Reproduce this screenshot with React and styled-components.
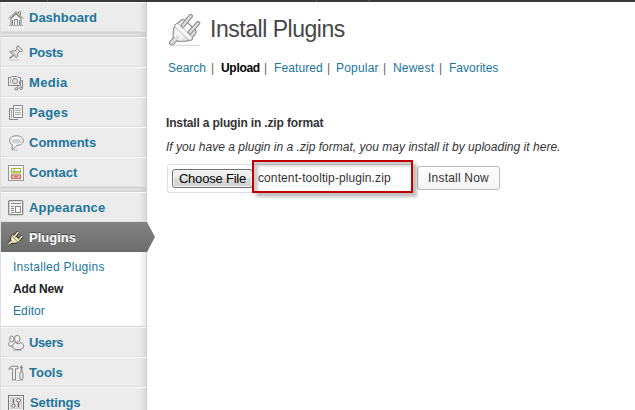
import React from 'react';
import styled, { createGlobalStyle } from 'styled-components';

const GlobalStyle = createGlobalStyle`
  * { box-sizing: border-box; }
  body { margin: 0; background: #fff; font-family: "Liberation Sans", Arial, sans-serif; font-size: 12px; color: #333; overflow: hidden; }
`;

const Page = styled.div`
  height: 410px;
  overflow: hidden;
  display: flex;
  flex-direction: column;
`;
const AdminBar = styled.div`
  flex: none;
  height: 2px;
  display: flex;
  background: #393737;
`;
const BarSection = styled.div`
  width: ${p => p.$w}px;
  border-right: 1px solid #5a5858;
`;
const Columns = styled.div`
  flex: 1;
  min-height: 0;
  display: flex;
`;
const Sidebar = styled.nav`
  flex: none;
  width: 147px;
  background: #ececec;
  border-left: 1px solid #dfdfdf;
  border-right: 1px solid #cfcfcf;
`;
const shade = 'linear-gradient(to left, rgba(0,0,0,.085), rgba(0,0,0,0) 7px)';
const MenuItem = styled.a`
  height: 30px;
  display: flex;
  align-items: center;
  padding-left: 7px;
  border-top: 1px solid #f9f9f9;
  border-bottom: 1px solid #dfdfdf;
  background: ${shade};
  color: #21759b;
  font-size: 13px;
  font-weight: bold;
  line-height: 18px;
`;
const MenuLabel = styled.span`
  margin-left: ${p => p.$gap ?? 5}px;
  padding-top: 2px;
  letter-spacing: ${p => p.$ls ?? 0}px;
`;
const Separator = styled.div`
  height: 5px;
  background: ${shade}, #dedede;
  border-top: 1px solid #cfcfcf;
  border-bottom: 1px solid #cfcfcf;
`;
const CurrentItem = styled(MenuItem)`
  width: 154px;
  color: #fff;
  border-top-color: #858585;
  border-bottom-color: #6b6b6b;
  background: linear-gradient(#828282, #6c6c6c);
  clip-path: polygon(0 0, 146px 0, 154px 50%, 146px 100%, 0 100%);
  position: relative;
  text-shadow: 0 -1px 0 #444;
`;
const Submenu = styled.div`
  height: 75px;
  padding: 4px 0 0 12px;
  background: ${shade}, #fff;
  border-bottom: 1px solid #d5d5d5;
`;
const SubItem = styled.a`
  display: block;
  height: 22px;
  line-height: 22px;
  color: ${p => (p.$active ? '#222' : '#21759b')};
  font-weight: ${p => (p.$active ? 'bold' : 'normal')};
  letter-spacing: ${p => p.$ls ?? 0}px;
`;
const Content = styled.main`
  flex: 1;
  padding: 11px 0 0 19px;
`;
const Heading = styled.header`
  display: flex;
  height: 36px;
`;
const Title = styled.h1`
  margin: 0 0 0 8px;
  font-size: 23px;
  line-height: 33px;
  font-weight: normal;
  color: #464646;
  letter-spacing: ${p => p.$ls}px;
`;
const Tabs = styled.div`
  display: flex;
  margin: 11px 0 0 2px;
  line-height: 16px;
`;
const Tab = styled.a`
  width: ${p => p.$w}px;
  white-space: nowrap;
  color: ${p => (p.$active ? '#000' : '#21759b')};
  font-weight: ${p => (p.$active ? 'bold' : 'normal')};
  letter-spacing: ${p => p.$ls ?? 0}px;
`;
const Pipe = styled.span`
  width: ${p => p.$w ?? 8}px;
  color: #666;
`;
const Subhead = styled.h4`
  margin: 38px 0 0;
  line-height: 18px;
  font-size: 12px;
  letter-spacing: ${p => p.$ls}px;
`;
const Help = styled.p`
  margin: 6px 0 0;
  line-height: 18px;
  font-style: italic;
  letter-spacing: ${p => p.$ls}px;
`;
const UploadForm = styled.form`
  display: flex;
  margin: 4px 0 0 1px;
  height: 37px;
`;
const FileField = styled.div`
  width: 246px;
  height: 29px;
  margin-top: 4px;
  padding: 4px 0 0 4px;
  display: flex;
  border: 1px solid #dfdfdf;
  border-radius: 3px;
`;
const ChooseButton = styled.button`
  flex: none;
  width: 81px;
  height: 19px;
  padding: 0;
  border: 1px solid #707070;
  border-radius: 3px;
  box-shadow: inset 0 0 0 1px #f8f8f8;
  background: linear-gradient(#f2f2f2, #ebebeb 50%, #dddddd 50%, #cfcfcf);
  font: 13px/15px "Liberation Sans", Arial, sans-serif;
  color: #000;
  letter-spacing: ${p => p.$ls}px;
  white-space: nowrap;
`;
const FileHighlight = styled.div`
  flex: none;
  width: 161px;
  height: 33px;
  margin: -9px 0 0 -1px;
  padding: 1px 0 0 4px;
  border: 2px solid #c00000;
  box-shadow: 4px 4px 3px rgba(0,0,0,.25), inset 4px 4px 3px rgba(0,0,0,.2);
  line-height: 31px;
  letter-spacing: ${p => p.$ls}px;
  position: relative;
`;
const InstallButton = styled.button`
  width: 83px;
  height: 24px;
  margin: 6px 0 0 4px;
  padding: 0;
  border: 1px solid #bbb;
  border-radius: 3px;
  background: linear-gradient(#fefefe, #f4f4f4);
  font: 12px/20px "Liberation Sans", Arial, sans-serif;
  color: #333;
  letter-spacing: ${p => p.$ls}px;
`;
const Glyph = styled.svg`
  flex: none;
  width: 16px;
  height: 16px;
  margin-top: ${p => p.$dy ?? 1}px;
  fill: none;
  stroke: #858585;
  stroke-width: 1;
  overflow: visible;
`;
const PlugArt = styled.svg`
  flex: none;
  width: 34px;
  height: 34px;
  margin-left: 2px;
`;

const icons = {
  home: (
    <>
      <path d="M3 8v7.5h10V8L8 3z" fill="#f4f4f4" />
      <path d="M.7 8.5L8 1.5l7.3 7M2.5 9.2L8 4l5.5 5.2M12.5 5V1.8h-2V3" />
      <path d="M6.5 15V9.5h3V15M4.5 10v5M11.5 10v5" />
      <path d="M1 15.5h14" stroke="#aaa" />
    </>
  ),
  pin: (
    <>
      <path d="M1.5 13.5L5.5 10" strokeWidth="1.4" />
      <path d="M1.8 6.8L4 5.8l3 .2 2-2.2L8.6 1.8 10 .8l4.8 4.4-1 1.4-2-.2-2.3 2.2.2 3-1.2 1.2z" fill="#e4e4e4" />
      <path d="M9.3 4l2.9 2.6M4 6.8l4.5 4.2" stroke="#a5a5a5" />
      <path d="M1 15h10" stroke="#c4c4c4" />
    </>
  ),
  media: (
    <>
      <path d="M.5 2.5H3l1-1h5l1 1h2.5v8H.5z" fill="#f5f5f5" />
      <circle cx="7" cy="6.2" r="2.7" fill="#ddd" />
      <path d="M2.5 3.5v5" stroke="#aaa" />
      <path d="M9.8 14V9.5M14.5 13V5.5l-3 .8v3" />
      <ellipse cx="8.3" cy="14" rx="1.5" ry="1.2" fill="#ddd" />
      <ellipse cx="13" cy="13.3" rx="1.5" ry="1.2" fill="#ddd" />
    </>
  ),
  pages: (
    <>
      <path d="M5.5 3.5h-4v11h8v-1" fill="#eee" />
      <path d="M5.5 .5h9v12h-9z" fill="#f7f7f7" />
      <path d="M7 3.5h6M7 5.5h6M7 7.5h6M7 9.5h6M3.5 4.5v9" stroke="#aaa" />
    </>
  ),
  comments: (
    <>
      <path d="M3 15h7" stroke="#bbb" />
      <path d="M8.5 .8c4.2 0 6.8 2 6.8 4.7s-2.7 4.7-6.3 4.8L5 14.2l-1.2-.5.8-3.9C2.6 9 1.6 7.5 1.6 5.5 1.6 2.8 4.5.8 8.5.8z" fill="#f7f7f7" />
      <ellipse cx="8.5" cy="6.2" rx="5" ry="2.4" fill="#d2d2d2" stroke="none" />
    </>
  ),
  contact: (
    <>
      <rect x=".5" y=".5" width="15" height="15" fill="#f7f5f4" stroke="#969696" />
      <rect x="3.5" y="3.5" width="9" height="3" fill="#fff" stroke="#a5b748" />
      <path d="M6.5 3.5v3" stroke="#a5b748" />
      <path d="M3 8h10" stroke="#b6c565" strokeWidth="1.6" />
      <rect x="3.5" y="10" width="9" height="3.5" fill="#f3c4be" stroke="#c35f55" />
      <path d="M6 11.7h4" stroke="#c35f55" />
    </>
  ),
  appearance: (
    <>
      <rect x=".7" y=".7" width="14" height="14" rx="1" fill="#f8f8f8" strokeWidth="1.3" />
      <path d="M3 3.5h10" />
      <path d="M3 6.5h3M3 8.5h3M3 10.5h3M3 12.5h3" />
      <rect x="7.5" y="6.5" width="5" height="6" fill="#fff" />
    </>
  ),
  plug: (
    <>
      <path d="M.8 14l3-2.5" stroke="#333" strokeWidth="3.6" />
      <path d="M2.2 9L3.4 5.6 5.4 4l7 6-2.4 2.8-5.5.7z" fill="#eeeebb" stroke="#333" />
      <path d="M6.5 6.5L10.5 1.8M11 9.8l3.6-4" stroke="#333" strokeWidth="3.4" />
      <path d="M6.5 6.5L10.3 2M10.8 10l3.6-4" stroke="#eeeebb" strokeWidth="1.6" />
      <path d="M.8 14l3.2-2.8" stroke="#e9eab0" strokeWidth="1.8" />
      <path d="M3.8 6.5l6 5.3" stroke="#8d8e60" />
    </>
  ),
  users: (
    <>
      <ellipse cx="3.8" cy="4" rx="2.1" ry="3" fill="#f2f2f2" />
      <path d="M2.5 6.5C0 7.5 0 10.5 1.5 11H6" fill="#eee" />
      <ellipse cx="9.3" cy="3.8" rx="2.7" ry="3.5" fill="#f2f2f2" />
      <path d="M7.5 7.5C3 10 3.5 14.6 9.8 14.6s8-4.6 3-7C11.5 9 9 9 7.5 7.5z" fill="#f0f0f0" />
      <path d="M5 15.5h9" stroke="#bbb" />
    </>
  ),
  tools: (
    <>
      <path d="M.8 4.2C1.5 2.2 3 1.2 5 1.2h5v2.6H7.5v11h-3v-11c-1.5-.3-2.5 0-3.7.4z" fill="#eee" />
      <path d="M13.5 .5v6" strokeWidth="1.6" />
      <path d="M12 2.5h3" />
      <rect x="12" y="7" width="3" height="7.5" rx="1" fill="#eee" />
      <path d="M4 15.5h11" stroke="#c4c4c4" />
    </>
  ),
  settings: (
    <>
      <rect x=".5" y=".5" width="15" height="15" fill="#f8f8f8" stroke="#777" />
      <rect x="2.5" y="2.5" width="11" height="11" fill="#e2e2e2" stroke="#ccc" />
      <path d="M5.5 3.5v5M10.5 7.5v5" stroke="#666" strokeWidth="1.3" />
      <circle cx="5.5" cy="10.7" r="1.6" fill="#fff" stroke="#666" />
      <circle cx="10.5" cy="5.3" r="1.8" fill="#fff" stroke="#666" />
    </>
  ),
};

const Icon = ({ name, dy }) => <Glyph viewBox="0 0 16 16" $dy={dy}>{icons[name]}</Glyph>;

const Entry = ({ icon, label, ls, gap, dy }) => (
  <MenuItem>
    <Icon name={icon} dy={dy} />
    <MenuLabel $ls={ls} $gap={gap}>{label}</MenuLabel>
  </MenuItem>
);

const LargePlug = () => (
  <PlugArt viewBox="0 0 34 34" fill="none" stroke="#909090">
    <defs>
      <linearGradient id="metal" x1="0" y1="0" x2="1" y2="1">
        <stop offset="0" stopColor="#e2e2e2" />
        <stop offset=".5" stopColor="#fafafa" />
        <stop offset="1" stopColor="#c6c6c6" />
      </linearGradient>
    </defs>
    <path d="M6 32.3h26" stroke="#d4d4d4" />
    <path d="M3.8 29.8l6-6" strokeWidth="5.6" strokeLinecap="round" />
    <path d="M5 24l.6-8 1.4-4 3.5-2.5L14 6.5l2.5.3L28 17.5l-.2 3.2-3 3.2-.8 3-6 1.3-7.5.3z" fill="url(#metal)" strokeWidth="1.2" strokeLinejoin="round" />
    <path d="M3.8 29.8l6-6" stroke="#dedede" strokeWidth="3.4" strokeLinecap="round" />
    <path d="M8 11.8L23 26" stroke="#fff" strokeWidth="2.4" />
    <path d="M9.5 10.3l15 14M6.5 13.5l14.5 14" stroke="#b4b4b4" strokeWidth=".9" />
    <path d="M15 12.5l7.8-9.5M22 19.2l8-9" strokeWidth="4.4" strokeLinecap="round" />
    <path d="M15 12.5l7.8-9.5M22 19.2l8-9" stroke="#dedede" strokeWidth="2.2" strokeLinecap="round" />
  </PlugArt>
);

export default function App() {
  return (
    <Page>
      <GlobalStyle />
      <AdminBar>
        <BarSection $w={48} />
        <BarSection $w={269} />
        <BarSection $w={53} />
      </AdminBar>
      <Columns>
        <Sidebar>
          <Entry icon="home" label="Dashboard" />
          <Separator />
          <Entry icon="pin" label="Posts" ls={-0.3} />
          <Entry icon="media" label="Media" ls={0.35} />
          <Entry icon="pages" label="Pages" ls={0.15} />
          <Entry icon="comments" label="Comments" />
          <Entry icon="contact" label="Contact" />
          <Separator />
          <Entry icon="appearance" label="Appearance" ls={0.2} />
          <CurrentItem>
            <Icon name="plug" />
            <MenuLabel>Plugins</MenuLabel>
          </CurrentItem>
          <Submenu>
            <SubItem $ls={0.25}>Installed Plugins</SubItem>
            <SubItem $active $ls={-0.15}>Add New</SubItem>
            <SubItem $ls={0.1}>Editor</SubItem>
          </Submenu>
          <Entry icon="users" label="Users" ls={-0.4} />
          <Entry icon="tools" label="Tools" />
          <Entry icon="settings" label="Settings" gap={6} ls={-0.1} />
        </Sidebar>
        <Content>
          <Heading>
            <LargePlug />
            <Title $ls={-0.47}>Install Plugins</Title>
          </Heading>
          <Tabs>
            <Tab $w={43}>Search</Tab><Pipe $w={10}>|</Pipe>
            <Tab $w={43} $active $ls={-0.3}>Upload</Tab><Pipe $w={10}>|</Pipe>
            <Tab $w={53} $ls={0.1}>Featured</Tab><Pipe $w={9}>|</Pipe>
            <Tab $w={47} $ls={0.2}>Popular</Tab><Pipe $w={10}>|</Pipe>
            <Tab $w={46} $ls={0.2}>Newest</Tab><Pipe $w={10}>|</Pipe>
            <Tab $w={50}>Favorites</Tab>
          </Tabs>
          <Subhead $ls={-0.15}>Install a plugin in .zip format</Subhead>
          <Help $ls={0.02}>If you have a plugin in a .zip format, you may install it by uploading it here.</Help>
          <UploadForm>
            <FileField>
              <ChooseButton type="button" $ls={-0.2}>Choose File</ChooseButton>
              <FileHighlight $ls={0.1}>content-tooltip-plugin.zip</FileHighlight>
            </FileField>
            <InstallButton type="button" $ls={0.2}>Install Now</InstallButton>
          </UploadForm>
        </Content>
      </Columns>
    </Page>
  );
}
